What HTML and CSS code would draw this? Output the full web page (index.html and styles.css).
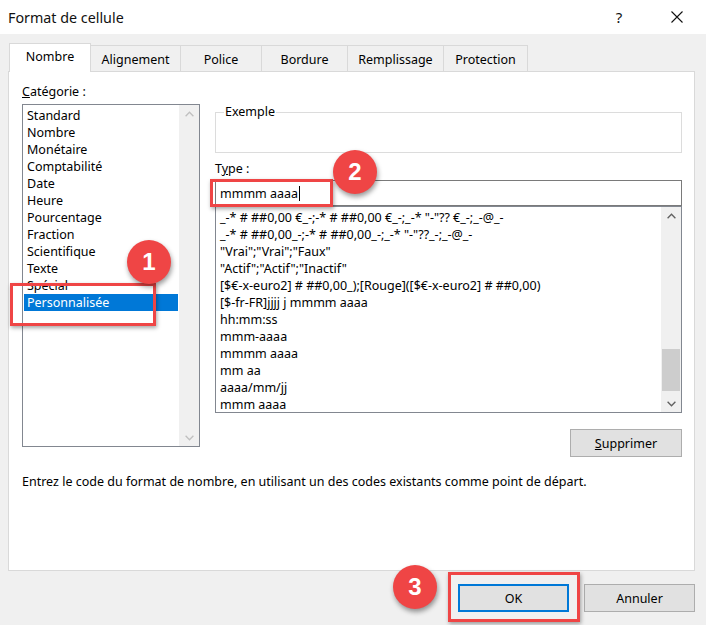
FILE: index.html
```html
<!DOCTYPE html>
<html lang="fr">
<head>
<meta charset="utf-8">
<title>Format de cellule</title>
<link rel="stylesheet" href="styles.css">
</head>
<body>
<div class="dialog">
  <header class="titlebar">
    <span class="title">Format de cellule</span>
    <div class="title-actions">
      <span class="tbtn help">?</span>
      <span class="tbtn">
        <svg width="12" height="12" viewBox="0 0 12 12"><path d="M0.5 0.5L11.5 11.5M11.5 0.5L0.5 11.5" stroke="#111" stroke-width="1.1" fill="none"/></svg>
      </span>
    </div>
  </header>

  <nav class="tabs">
    <div class="tab active t-nombre">Nombre</div>
    <div class="tab t-align">Alignement</div>
    <div class="tab t-police">Police</div>
    <div class="tab t-bordure">Bordure</div>
    <div class="tab t-rempl">Remplissage</div>
    <div class="tab t-prot">Protection</div>
  </nav>

  <section class="panel">
    <div class="columns">
      <div class="left">
        <div class="label"><u>C</u>atégorie :</div>
        <div class="listbox cat">
          <ul class="items">
            <li>Standard</li>
            <li>Nombre</li>
            <li>Monétaire</li>
            <li>Comptabilité</li>
            <li>Date</li>
            <li>Heure</li>
            <li>Pourcentage</li>
            <li>Fraction</li>
            <li>Scientifique</li>
            <li>Texte</li>
            <li>Spécial</li>
            <li class="selected">Personnalisée</li>
          </ul>
          <div class="scrollbar disabled">
            <div class="arrow"><svg width="9" height="6" viewBox="0 0 9 6"><polyline points="0.6,5.2 4.5,1.2 8.4,5.2" fill="none" stroke="currentColor" stroke-width="1.3"/></svg></div>
            <div class="arrow"><svg width="9" height="6" viewBox="0 0 9 6"><polyline points="0.6,0.8 4.5,4.8 8.4,0.8" fill="none" stroke="currentColor" stroke-width="1.3"/></svg></div>
          </div>
        </div>
      </div>

      <div class="right">
        <div class="sample"><span class="legend">Exemple</span></div>
        <div class="label type-label">T<u>y</u>pe :</div>
        <div class="textbox">mmmm aaaa<span class="caret"></span></div>
        <div class="listbox formats">
          <ul class="items">
            <li>_-* # ##0,00 €_-;-* # ##0,00 €_-;_-* "-"?? €_-;_-@_-</li>
            <li>_-* # ##0,00_-;-* # ##0,00_-;_-* "-"??_-;_-@_-</li>
            <li>"Vrai";"Vrai";"Faux"</li>
            <li>"Actif";"Actif";"Inactif"</li>
            <li>[$€-x-euro2] # ##0,00_);[Rouge]([$€-x-euro2] # ##0,00)</li>
            <li>[$-fr-FR]jjjj j mmmm aaaa</li>
            <li>hh:mm:ss</li>
            <li>mmm-aaaa</li>
            <li>mmmm aaaa</li>
            <li>mm aa</li>
            <li>aaaa/mm/jj</li>
            <li>mmm aaaa</li>
          </ul>
          <div class="scrollbar">
            <div class="arrow"><svg width="9" height="6" viewBox="0 0 9 6"><polyline points="0.6,5.2 4.5,1.2 8.4,5.2" fill="none" stroke="currentColor" stroke-width="1.3"/></svg></div>
            <div class="track"><div class="thumb"></div></div>
            <div class="arrow"><svg width="9" height="6" viewBox="0 0 9 6"><polyline points="0.6,0.8 4.5,4.8 8.4,0.8" fill="none" stroke="currentColor" stroke-width="1.3"/></svg></div>
          </div>
        </div>
        <div class="actions">
          <button class="btn delete"><u>S</u>upprimer</button>
        </div>
      </div>
    </div>
    <p class="hint">Entrez le code du format de nombre, en utilisant un des codes existants comme point de départ.</p>
  </section>

  <footer class="footer">
    <button class="btn wide primary">OK</button>
    <button class="btn wide">Annuler</button>
  </footer>

  <div class="mark mark-1"></div>
  <div class="badge badge-1">1</div>
  <div class="mark mark-2"></div>
  <div class="badge badge-2">2</div>
  <div class="mark mark-3"></div>
  <div class="badge badge-3">3</div>
</div>
</body>
</html>
```

FILE: styles.css
```css
* { box-sizing: border-box; }

html, body {
  margin: 0;
  padding: 0;
}

body {
  width: 706px;
  height: 625px;
  overflow: hidden;
  background: #f0f0f0;
  font-family: "Noto Sans", "Open Sans", sans-serif;
  font-size: 12.5px;
  color: #000;
}

.dialog {
  position: relative;
  width: 706px;
  height: 625px;
}

/* Title bar */
.titlebar {
  height: 34px;
  background: #fff;
  display: flex;
  align-items: center;
  padding-left: 8px;
}

.title {
  flex: 1;
  font-size: 14.3px;
  color: #111;
}

.title-actions {
  display: flex;
  gap: 12px;
  padding-right: 6px;
}

.tbtn {
  width: 46px;
  height: 34px;
  display: flex;
  align-items: center;
  justify-content: center;
  font-size: 15px;
  color: #111;
}

/* Tabs */
.tabs {
  position: relative;
  z-index: 1;
  display: flex;
  align-items: flex-start;
  height: 28px;
  margin-top: 9px;
  padding-left: 9px;
}

.tab {
  height: 26px;
  margin-top: 2px;
  margin-left: -1px;
  border: 1px solid #d9d9d9;
  border-bottom: none;
  background: #f0f0f0;
  display: flex;
  align-items: center;
  justify-content: center;
  padding-top: 1px;
}

.tab.active {
  height: 29px;
  margin-top: 0;
  margin-left: 0;
  background: #fff;
  padding-top: 0;
  padding-bottom: 3px;
}

.t-nombre { width: 82px; }
.t-align { width: 91px; }
.t-police { width: 82px; }
.t-bordure { width: 87px; }
.t-rempl { width: 97px; }
.t-prot { width: 85px; }

/* Panel */
.panel {
  width: 687px;
  height: 500px;
  margin-left: 8px;
  background: #fff;
  border: 1px solid #d9d9d9;
  padding: 12px 12px 0 13px;
}

.columns {
  display: grid;
  grid-template-columns: 178px 467px;
  column-gap: 15px;
}

.label {
  line-height: 16px;
  height: 16px;
}

.listbox {
  display: flex;
  border: 1px solid #828790;
  overflow: hidden;
  background: #fff;
}

.items {
  list-style: none;
  margin: 0;
  padding: 2px 0 0 1px;
  flex: 1;
  min-width: 0;
}

.items li {
  height: 17px;
  line-height: 17px;
  padding-left: 3px;
  white-space: nowrap;
}

.items li.selected {
  background: #0078d7;
  color: #fff;
}

.cat {
  margin-top: 4px;
  height: 343px;
}

.scrollbar {
  width: 20px;
  flex: none;
  background: #f0f0f0;
  display: flex;
  flex-direction: column;
  justify-content: space-between;
  color: #606060;
}

.scrollbar.disabled {
  color: #c0c0c0;
  margin-left: 1px;
}

.arrow {
  height: 17px;
  display: flex;
  align-items: center;
  justify-content: center;
}

.track {
  flex: 1;
}

.thumb {
  margin: 125px 1px 0 1px;
  height: 42px;
  background: #cdcdcd;
}

/* Right column */
.sample {
  margin-top: 28px;
  height: 41px;
  border: 1px solid #dcdcdc;
}

.legend {
  display: inline-block;
  margin: -9px 0 0 8px;
  padding: 0 1px;
  line-height: 16px;
  background: #fff;
  vertical-align: top;
}

.type-label {
  margin-top: 8px;
}

.textbox {
  margin-top: 3px;
  height: 26px;
  border: 1px solid #7a7a7a;
  padding-left: 4px;
  display: flex;
  align-items: center;
}

.caret {
  display: inline-block;
  width: 1px;
  height: 15px;
  background: #000;
  margin-left: 1px;
}

.formats {
  height: 207px;
}

.formats .items {
  padding-top: 2px;
}

.actions {
  display: flex;
  justify-content: flex-end;
  margin-top: 16px;
}

.btn {
  height: 28px;
  width: 112px;
  background: #e1e1e1;
  border: 1px solid #adadad;
  font-family: inherit;
  font-size: 12.5px;
  color: #000;
  padding: 0;
}

.btn.wide {
  width: 111px;
}

.btn.primary {
  border: 2px solid #0078d7;
}

.hint {
  margin: 17px 0 0 0;
  line-height: 16px;
}

/* Footer */
.footer {
  display: flex;
  justify-content: flex-end;
  gap: 15px;
  padding-right: 11px;
  margin-top: 13px;
}

/* Annotations overlaid on the screenshot */
.mark {
  position: absolute;
  border: 3px solid #ef4545;
  box-shadow: 1px 2px 4px rgba(0, 0, 0, 0.35);
}

.mark-1 { left: 10px; top: 283px; width: 146px; height: 43px; }
.mark-2 { left: 210px; top: 179px; width: 123px; height: 28px; }
.mark-3 { left: 448px; top: 572px; width: 132px; height: 50px; }

.badge {
  position: absolute;
  width: 44px;
  height: 44px;
  border-radius: 50%;
  background: #ef4545;
  box-shadow: 1px 3px 5px rgba(0, 0, 0, 0.4);
  color: #fff;
  font-family: "Liberation Sans", Arial, sans-serif;
  font-weight: bold;
  font-size: 24px;
  display: flex;
  align-items: center;
  justify-content: center;
}

.badge-1 { left: 127px; top: 240px; }
.badge-2 { left: 333px; top: 150px; }
.badge-3 { left: 393px; top: 565px; }
```
